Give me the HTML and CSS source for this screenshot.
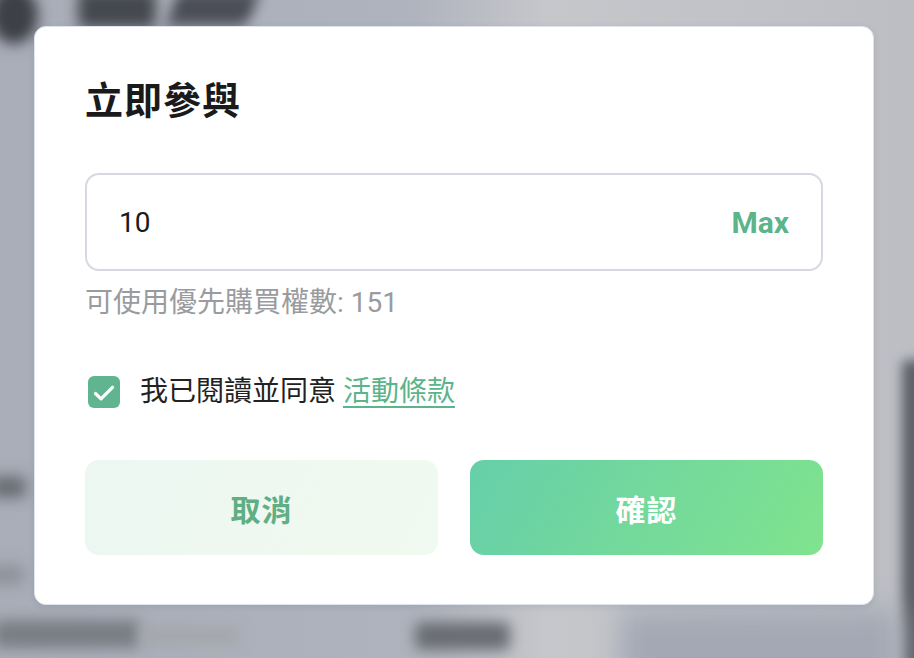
FILE: index.html
```html
<!DOCTYPE html>
<html lang="zh-Hant">
<head>
  <meta charset="UTF-8">
  <title>立即參與</title>
  <link rel="stylesheet" href="styles.css">
</head>
<body>

<!-- blurred page behind the dialog -->
<div class="backdrop">
  <div class="blob blob-logo"></div>
  <div class="blob blob-title"></div>
  <div class="blob blob-title2"></div>
  <div class="blob blob-side"></div>
  <div class="blob blob-left1"></div>
  <div class="blob blob-left2"></div>
  <div class="blob blob-foot1"></div>
  <div class="blob blob-foot2"></div>
  <div class="blob blob-foot3"></div>
  <div class="blob blob-light"></div>
</div>

<div class="modal">
  <h2 class="modal-title">立即參與</h2>

  <div class="amount-box">
    <input class="amount-input" type="text" value="10">
    <button class="max-btn">Max</button>
  </div>
  <div class="hint">可使用優先購買權數: 151</div>

  <label class="agree">
    <span class="checkbox">
      <svg width="32" height="32" viewBox="0 0 32 32"><path d="M7.5 17.5l5.5 5.3 11.5-11.5" fill="none" stroke="#fff" stroke-width="3.2" stroke-linecap="round" stroke-linejoin="round"/></svg>
    </span>
    <span class="agree-text">我已閱讀並同意 <a href="#" class="terms">活動條款</a></span>
  </label>

  <div class="actions">
    <button class="btn btn-cancel">取消</button>
    <button class="btn btn-confirm">確認</button>
  </div>
</div>

</body>
</html>
```

FILE: styles.css
```css
html, body {
  margin: 0;
  height: 100%;
}

body {
  font-family: Roboto, "Noto Sans CJK TC", sans-serif;
  overflow: hidden;
  position: relative;
  background: linear-gradient(90deg, #a9adb8 0%, #afb3bd 45%, #c6c7cb 60%, #bcbec4 100%);
}

.backdrop {
  position: absolute;
  inset: 0;
  overflow: hidden;
}

.blob {
  position: absolute;
  filter: blur(7px);
  border-radius: 6px;
}

.blob-logo {
  left: -10px;
  top: -14px;
  width: 48px;
  height: 58px;
  border-radius: 50%;
  background: #3e4047;
}
.blob-title {
  left: 78px;
  top: -10px;
  width: 78px;
  height: 38px;
  background: #45484f;
}
.blob-title2 {
  left: 172px;
  top: -10px;
  width: 82px;
  height: 36px;
  background: #4b4e56;
  transform: skewX(-20deg);
}
.blob-side {
  left: 902px;
  top: 360px;
  width: 40px;
  height: 340px;
  background: #5e6068;
  filter: blur(6px);
}
.blob-left1 {
  left: -10px;
  top: 476px;
  width: 36px;
  height: 22px;
  background: #6a6d74;
}
.blob-left2 {
  left: -10px;
  top: 565px;
  width: 34px;
  height: 20px;
  background: #8f929a;
}
.blob-foot1 {
  left: -6px;
  top: 620px;
  width: 146px;
  height: 28px;
  background: #7a7d84;
}
.blob-foot2 {
  left: 140px;
  top: 626px;
  width: 100px;
  height: 20px;
  background: #a5a7ad;
}
.blob-foot3 {
  left: 415px;
  top: 622px;
  width: 95px;
  height: 28px;
  background: #6a6d73;
}
.blob-light {
  left: 620px;
  top: 610px;
  width: 280px;
  height: 80px;
  background: #a3a8b4;
  filter: blur(14px);
}

.modal {
  position: absolute;
  left: 34px;
  top: 26px;
  width: 840px;
  box-sizing: border-box;
  padding: 50px 50px 49px 50px;
  background: #fff;
  border: 1px solid #dfe4ec;
  border-radius: 12px;
  box-shadow: 0 2px 6px rgba(60, 64, 80, 0.12);
}

.modal-title {
  margin: 0;
  font-size: 38px;
  line-height: 48px;
  font-weight: 700;
  color: #1a1a1a;
  letter-spacing: 1px;
}

.amount-box {
  margin-top: 48px;
  height: 98px;
  box-sizing: border-box;
  border: 2px solid #d6d9df;
  border-radius: 14px;
  display: flex;
  align-items: center;
  padding: 0 32px;
}

.amount-input {
  flex: 1;
  min-width: 0;
  border: none;
  outline: none;
  font-family: Roboto, sans-serif;
  font-size: 28px;
  color: #1a1a1a;
  padding: 0;
  background: transparent;
}

.max-btn {
  border: none;
  background: none;
  padding: 0;
  font-family: Roboto, sans-serif;
  font-size: 30px;
  font-weight: 700;
  color: #5bb48a;
  cursor: pointer;
}

.hint {
  margin-top: 14px;
  font-size: 28px;
  line-height: 36px;
  color: #999b9e;
}

.agree {
  margin-top: 53px;
  display: flex;
  align-items: center;
  gap: 20px;
  cursor: pointer;
}

.checkbox {
  flex: 0 0 32px;
  width: 32px;
  height: 32px;
  margin-left: 3px;
  border-radius: 6px;
  background: #60b490;
  display: flex;
  align-items: center;
  justify-content: center;
}

.agree-text {
  font-size: 28px;
  line-height: 36px;
  color: #222;
}

.terms {
  color: #5bb48a;
  text-decoration: underline;
  text-underline-offset: 5px;
  text-decoration-thickness: 2px;
}

.actions {
  margin-top: 50px;
  display: flex;
  gap: 32px;
}

.btn {
  flex: 1;
  height: 95px;
  border: none;
  border-radius: 14px;
  font-family: Roboto, "Noto Sans CJK TC", sans-serif;
  font-size: 30px;
  font-weight: 700;
  letter-spacing: 1px;
  cursor: pointer;
}

.btn-cancel {
  background: linear-gradient(120deg, #ecf7f2 0%, #f1faf0 100%);
  color: #5fae84;
}

.btn-confirm {
  background: linear-gradient(120deg, #66cfa9 0%, #80e38e 100%);
  color: #fff;
}
```
